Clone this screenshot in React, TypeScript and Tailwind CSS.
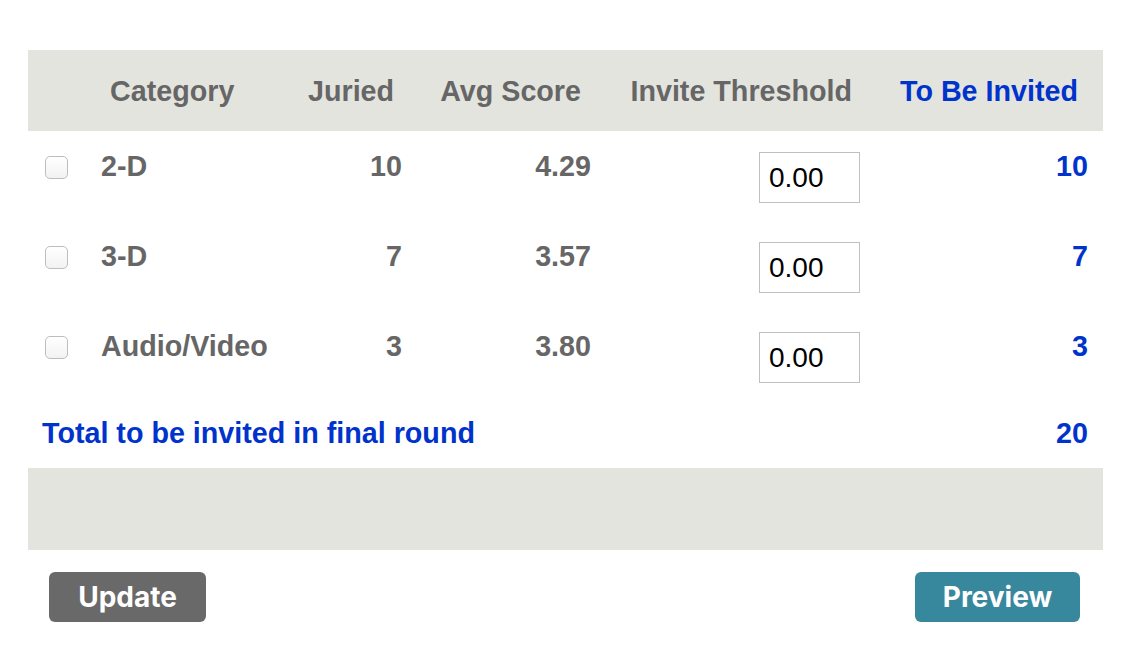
import { useState } from 'react';

type Row = { category: string; juried: number; avg: string; invited: number };

const rows: Row[] = [
  { category: '2-D', juried: 10, avg: '4.29', invited: 10 },
  { category: '3-D', juried: 7, avg: '3.57', invited: 7 },
  { category: 'Audio/Video', juried: 3, avg: '3.80', invited: 3 },
];

const font = { fontFamily: '"Liberation Sans", Arial, Helvetica, sans-serif' };

export default function App() {
  const [thresholds, setThresholds] = useState(rows.map(() => '0.00'));
  const total = rows.reduce((sum, r) => sum + r.invited, 0);

  return (
    <div className="bg-white pt-[50px] pb-[40px]" style={font}>
      <div className="ml-[28px] w-[1075px] text-[28.7px] font-bold leading-[32px] text-[#666666]">
        {/* header */}
        <div className="flex h-[81px] items-center bg-[#e4e4df] whitespace-nowrap">
          <div className="w-[73px]" />
          <div className="w-[207px] pl-[9px]">Category</div>
          <div className="w-[94px] text-right pr-[10px]">Juried</div>
          <div className="w-[189px] text-right pr-[10px]">Avg Score</div>
          <div className="w-[269px] text-right pr-[8px]">Invite Threshold</div>
          <div className="w-[228px] text-right pr-[10px] text-[#0033cc]">To Be Invited</div>
        </div>

        {rows.map((r, i) => (
          <div key={r.category} className="flex h-[90px] items-start pt-[19px] whitespace-nowrap">
            <div className="w-[73px]">
              <input
                type="checkbox"
                className="ml-[17px] mt-[6px] block h-[23px] w-[23px] appearance-none rounded-[5px] border border-[#bdbdbd] bg-gradient-to-b from-white to-[#f2f2f2]"
              />
            </div>
            <div className="w-[207px]">{r.category}</div>
            <div className="w-[94px] text-right">{r.juried}</div>
            <div className="w-[189px] text-right">{r.avg}</div>
            <div className="flex w-[269px] justify-end">
              <input
                value={thresholds[i]}
                onChange={(e) => setThresholds(thresholds.map((t, j) => (j === i ? e.target.value : t)))}
                className="mt-[2px] h-[51px] w-[101px] border border-[#c0c0c0] bg-white pl-[9px] text-[28px] font-normal leading-[32px] text-black outline-none"
                style={font}
              />
            </div>
            <div className="w-[228px] text-right text-[#0033cc]">{r.invited}</div>
          </div>
        ))}

        {/* total */}
        <div className="flex h-[67px] items-start pt-[16px] text-[#0033cc]">
          <div className="pl-[14px]">Total to be invited in final round</div>
          <div className="ml-auto pr-[15px]">{total}</div>
        </div>

        <div className="h-[82px] bg-[#e4e4df]" />

        <div
          className="mt-[22px] flex items-center justify-between"
          style={{ fontFamily: 'Inter, "Noto Sans", sans-serif' }}
        >
          <button className="ml-[21px] h-[50px] w-[157px] rounded-[6px] bg-[#696969] text-[28px] font-bold text-white">
            Update
          </button>
          <button className="mr-[23px] h-[50px] w-[165px] rounded-[6px] bg-[#37889c] text-[28px] font-bold text-white">
            Preview
          </button>
        </div>
      </div>
    </div>
  );
}
